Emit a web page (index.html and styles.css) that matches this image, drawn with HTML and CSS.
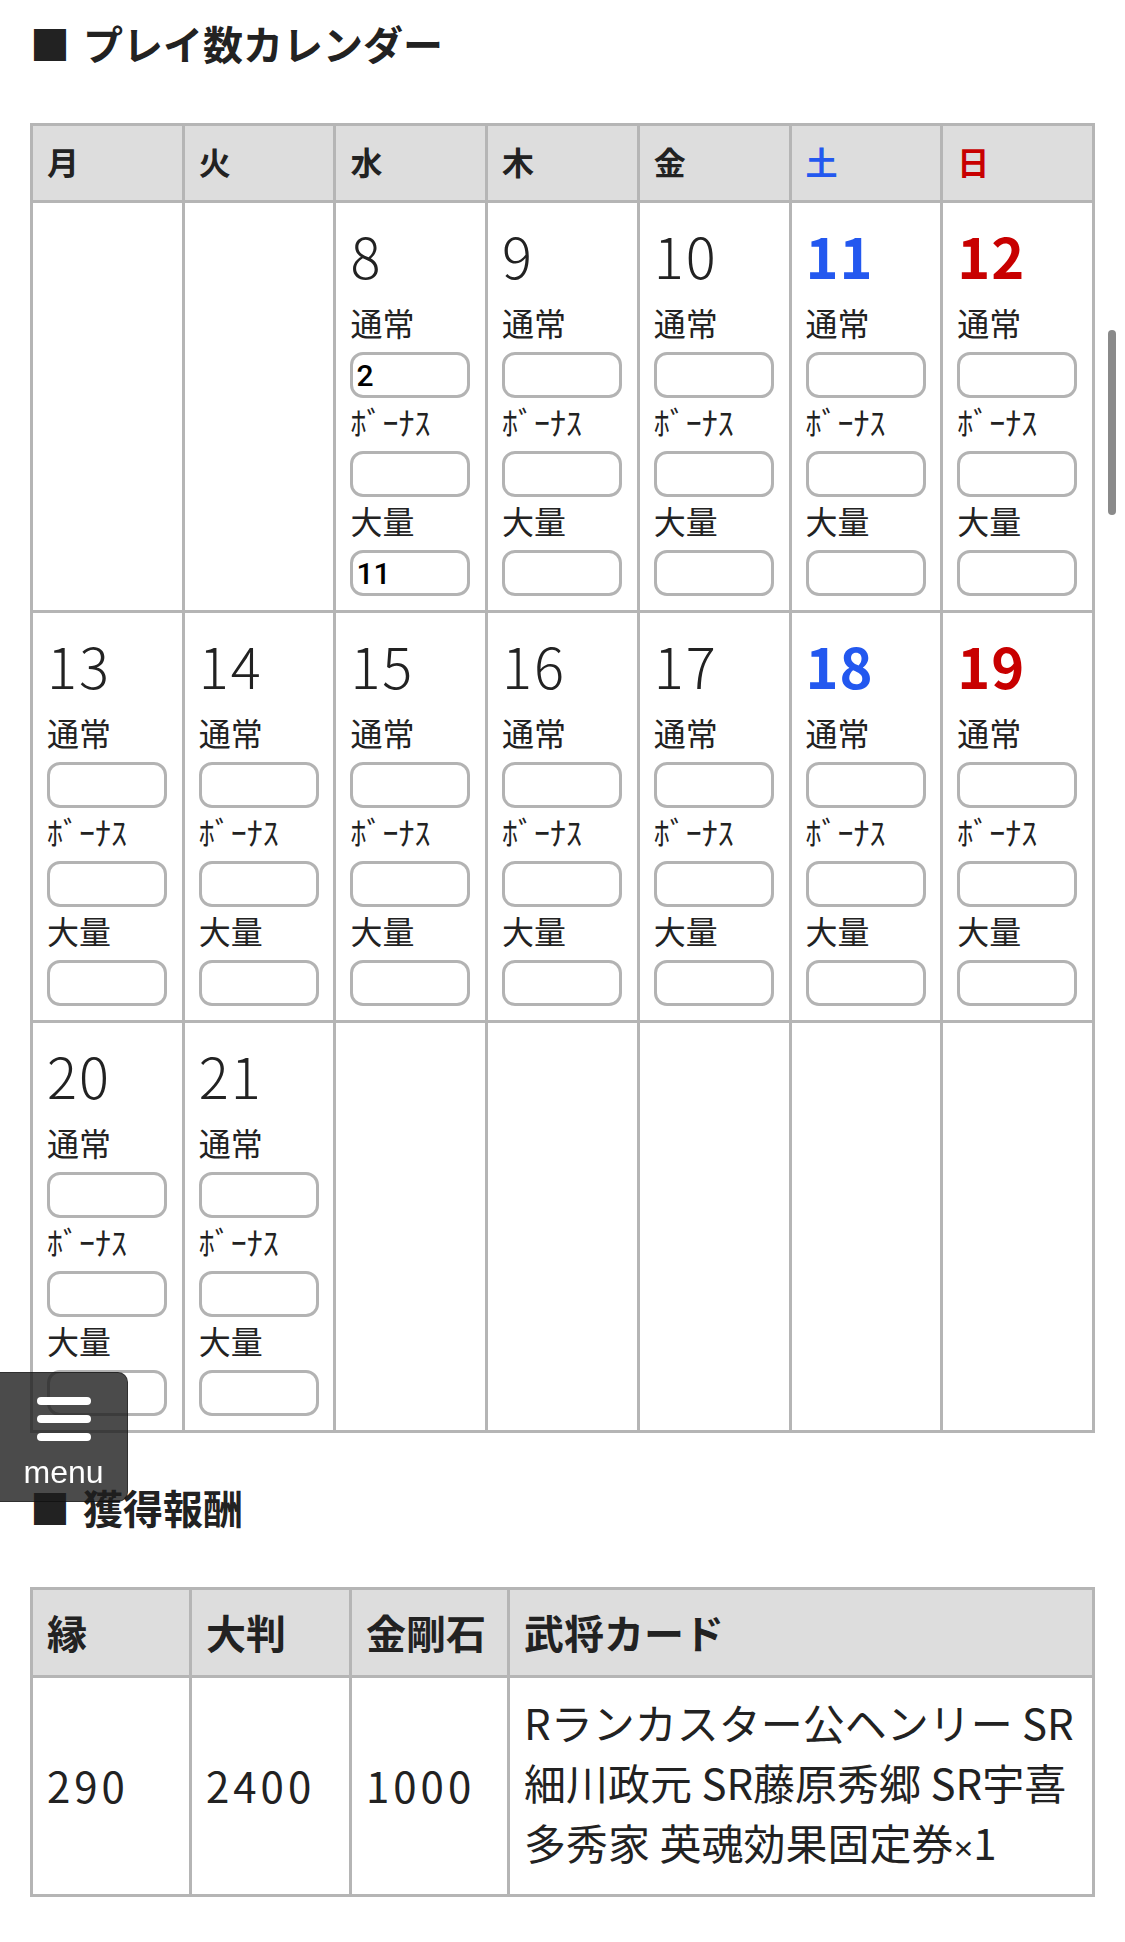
FILE: index.html
```html
<!DOCTYPE html>
<html lang="ja">
<head>
<meta charset="utf-8">
<title>プレイ数カレンダー</title>
<link rel="stylesheet" href="styles.css">
</head>
<body>
<h2 class="ttl"><span class="sq">■</span>プレイ数カレンダー</h2>
<table class="cal">
  <thead>
    <tr>
      <th>月</th><th>火</th><th>水</th><th>木</th><th>金</th><th class="sat">土</th><th class="sun">日</th>
    </tr>
  </thead>
  <tbody>
    <tr>
      <td></td>
      <td></td>
      <td><div class="day">8</div><div class="lbl">通常</div><input class="cnt" type="text" value="2"><div class="lbl">ﾎﾞｰﾅｽ</div><input class="cnt" type="text"><div class="lbl">大量</div><input class="cnt" type="text" value="11"></td>
      <td><div class="day">9</div><div class="lbl">通常</div><input class="cnt" type="text"><div class="lbl">ﾎﾞｰﾅｽ</div><input class="cnt" type="text"><div class="lbl">大量</div><input class="cnt" type="text"></td>
      <td><div class="day">10</div><div class="lbl">通常</div><input class="cnt" type="text"><div class="lbl">ﾎﾞｰﾅｽ</div><input class="cnt" type="text"><div class="lbl">大量</div><input class="cnt" type="text"></td>
      <td><div class="day sat">11</div><div class="lbl">通常</div><input class="cnt" type="text"><div class="lbl">ﾎﾞｰﾅｽ</div><input class="cnt" type="text"><div class="lbl">大量</div><input class="cnt" type="text"></td>
      <td><div class="day sun">12</div><div class="lbl">通常</div><input class="cnt" type="text"><div class="lbl">ﾎﾞｰﾅｽ</div><input class="cnt" type="text"><div class="lbl">大量</div><input class="cnt" type="text"></td>
    </tr>
    <tr>
      <td><div class="day">13</div><div class="lbl">通常</div><input class="cnt" type="text"><div class="lbl">ﾎﾞｰﾅｽ</div><input class="cnt" type="text"><div class="lbl">大量</div><input class="cnt" type="text"></td>
      <td><div class="day">14</div><div class="lbl">通常</div><input class="cnt" type="text"><div class="lbl">ﾎﾞｰﾅｽ</div><input class="cnt" type="text"><div class="lbl">大量</div><input class="cnt" type="text"></td>
      <td><div class="day">15</div><div class="lbl">通常</div><input class="cnt" type="text"><div class="lbl">ﾎﾞｰﾅｽ</div><input class="cnt" type="text"><div class="lbl">大量</div><input class="cnt" type="text"></td>
      <td><div class="day">16</div><div class="lbl">通常</div><input class="cnt" type="text"><div class="lbl">ﾎﾞｰﾅｽ</div><input class="cnt" type="text"><div class="lbl">大量</div><input class="cnt" type="text"></td>
      <td><div class="day">17</div><div class="lbl">通常</div><input class="cnt" type="text"><div class="lbl">ﾎﾞｰﾅｽ</div><input class="cnt" type="text"><div class="lbl">大量</div><input class="cnt" type="text"></td>
      <td><div class="day sat">18</div><div class="lbl">通常</div><input class="cnt" type="text"><div class="lbl">ﾎﾞｰﾅｽ</div><input class="cnt" type="text"><div class="lbl">大量</div><input class="cnt" type="text"></td>
      <td><div class="day sun">19</div><div class="lbl">通常</div><input class="cnt" type="text"><div class="lbl">ﾎﾞｰﾅｽ</div><input class="cnt" type="text"><div class="lbl">大量</div><input class="cnt" type="text"></td>
    </tr>
    <tr>
      <td><div class="day">20</div><div class="lbl">通常</div><input class="cnt" type="text"><div class="lbl">ﾎﾞｰﾅｽ</div><input class="cnt" type="text"><div class="lbl">大量</div><input class="cnt" type="text"></td>
      <td><div class="day">21</div><div class="lbl">通常</div><input class="cnt" type="text"><div class="lbl">ﾎﾞｰﾅｽ</div><input class="cnt" type="text"><div class="lbl">大量</div><input class="cnt" type="text"></td>
      <td></td>
      <td></td>
      <td></td>
      <td></td>
      <td></td>
    </tr>
  </tbody>
</table>

<h2 class="ttl sec"><span class="sq">■</span>獲得報酬</h2>
<table class="rew">
  <colgroup>
    <col class="c1"><col class="c2"><col class="c3"><col>
  </colgroup>
  <thead>
    <tr><th>縁</th><th>大判</th><th>金剛石</th><th>武将カード</th></tr>
  </thead>
  <tbody>
    <tr>
      <td class="num">290</td>
      <td class="num">2400</td>
      <td class="num">1000</td>
      <td class="cards">Rランカスター公ヘンリー SR<br>細川政元 SR藤原秀郷 SR宇喜<br>多秀家 英魂効果固定券<span class="times">×</span>1</td>
    </tr>
  </tbody>
</table>

<button class="menu" type="button">
  <span class="bar"></span><span class="bar"></span><span class="bar"></span>
  <span class="menu-txt">menu</span>
</button>
<div class="scroll-ind"></div>
</body>
</html>
```

FILE: styles.css
```css
html, body {
  margin: 0;
  background: #fff;
}
body {
  padding: 0 30px;
  font-family: "Noto Sans CJK JP", "Noto Sans", sans-serif;
  color: #222;
}

.ttl {
  margin: 14px 0 51px;
  font-size: 40px;
  line-height: 58px;
  font-weight: 700;
  color: #222;
}
.ttl.sec {
  margin-top: 45px;
  margin-bottom: 51px;
}
.sq {
  margin-right: 13px;
}

/* calendar */
.cal {
  width: 100%;
  table-layout: fixed;
  border-collapse: collapse;
  border: 3px solid #b5b5b5;
}
.cal th, .cal td {
  border: 3px solid #b5b5b5;
  text-align: left;
}
.cal th {
  background: #dddddd;
  font-size: 32px;
  line-height: 46px;
  font-weight: 700;
  padding: 12px 14px 16px;
  color: #222;
}
.cal td {
  vertical-align: top;
  padding: 7px 14px 14px;
}
.sat { color: #2358ef !important; }
.sun { color: #c80000 !important; }

.day {
  font-size: 56px;
  line-height: 89px;
  font-weight: 300;
  letter-spacing: 2px;
  color: #222;
}
.day.sat, .day.sun {
  font-weight: 700;
  letter-spacing: 1px;
}
.lbl {
  font-size: 32px;
  line-height: 46px;
  padding-bottom: 7px;
  color: #222;
  white-space: nowrap;
}
.cnt {
  display: block;
  box-sizing: border-box;
  width: 120px;
  height: 46px;
  margin: 0;
  padding: 0 3px;
  border: 3px solid #b3b3b3;
  border-radius: 13px;
  background: #fff;
  font-family: Roboto, "Liberation Sans", sans-serif;
  font-weight: 500;
  font-size: 30px;
  color: #000;
  outline: none;
}

/* rewards */
.rew {
  width: 100%;
  table-layout: fixed;
  border-collapse: collapse;
  border: 3px solid #b5b5b5;
}
.rew .c1 { width: 159px; }
.rew .c2 { width: 160px; }
.rew .c3 { width: 158px; }
.rew th, .rew td {
  border: 3px solid #b5b5b5;
  text-align: left;
}
.rew th {
  background: #dddddd;
  font-size: 40px;
  line-height: 57px;
  font-weight: 700;
  padding: 14px 14px;
  color: #222;
}
.rew td {
  vertical-align: middle;
  padding: 14px 14px 16px;
  font-size: 42px;
  line-height: 60px;
  color: #222;
}
.rew td.num {
  font-size: 42px;
  letter-spacing: 4px;
}
.rew td.cards {
  white-space: nowrap;
}
.times {
  font-family: "Liberation Sans", Arial, sans-serif;
  font-size: 34px;
}

/* floating menu */
.menu {
  position: fixed;
  left: 0;
  top: 1372px;
  width: 128px;
  height: 130px;
  box-sizing: border-box;
  margin: 0;
  padding: 24px 0 0;
  border: 1px solid rgba(0, 0, 0, 0.35);
  border-left: none;
  border-radius: 0 10px 10px 0;
  background: rgba(30, 30, 30, 0.8);
  display: flex;
  flex-direction: column;
  align-items: center;
  gap: 10px;
}
.bar {
  display: block;
  width: 54px;
  height: 8px;
  border-radius: 4px;
  background: #fff;
}
.menu-txt {
  margin-top: 1px;
  font-family: "Liberation Sans", Arial, sans-serif;
  font-size: 32px;
  line-height: 40px;
  color: #fff;
}

.scroll-ind {
  position: fixed;
  right: 9px;
  top: 330px;
  width: 8px;
  height: 185px;
  border-radius: 4px;
  background: #8a8a8a;
}
```
